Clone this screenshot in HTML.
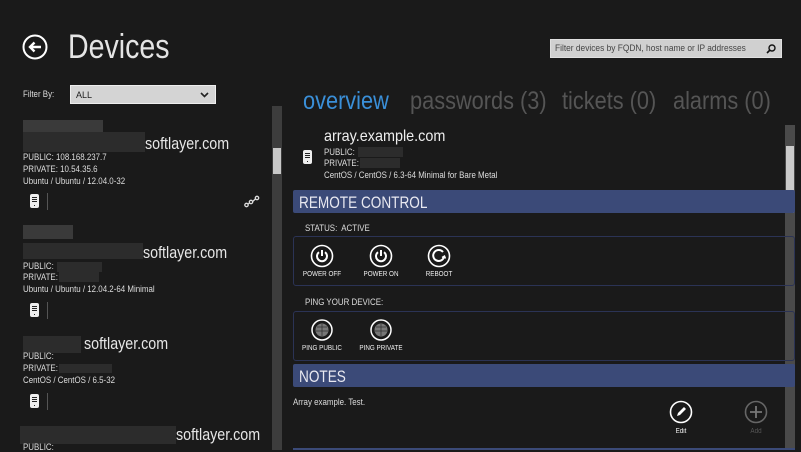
<!DOCTYPE html>
<html><head><meta charset="utf-8"><style>
*{margin:0;padding:0;box-sizing:border-box}
body{width:801px;height:450px;overflow:hidden;background:#1a1a1a;color:#e6e6e6;font-family:"Liberation Sans",sans-serif;position:relative}
.a{position:absolute;white-space:nowrap;transform-origin:left top}
.s{font-size:9px;color:#ddd;transform:scaleX(.88)}
.sl{font-size:17px;transform:scaleX(.84)}
.blur{position:absolute;background:#3a3a3a}
.b2{position:absolute;background:#2c2c2c}
.srv{position:absolute;width:9px;height:14px;background:#eee;border-radius:2px}
.srv i{position:absolute;left:2px;width:5px;height:1px;background:#222}
.srv b{position:absolute;left:4px;top:11px;width:1px;height:1px;background:#222}
.sep{position:absolute;width:1px;height:17px;background:#555}
.bar{position:absolute;left:293px;width:502px;height:23px;background:#3b4a78;border-radius:2px;color:#e8e8f0}
.bar span{position:absolute;left:6px;top:3px;font-size:17px;transform:scaleX(.8);transform-origin:left top}
.box{position:absolute;left:293px;width:502px;border:1px solid #2b3355;border-radius:3px}
.lbl{font-size:7px;color:#eee;text-align:center;width:60px;transform:scaleX(.9);transform-origin:center top}
.tab{font-size:25px;transform:scaleX(.87)}
</style></head><body>
<svg class="a" style="left:22px;top:34px" width="26" height="26" viewBox="0 0 26 26"><circle cx="13" cy="13" r="11.5" fill="none" stroke="#fff" stroke-width="2"/><path d="M19 13H8M12.5 8.5L8 13l4.5 4.5" fill="none" stroke="#fff" stroke-width="2.4"/></svg>
<div class="a" style="left:68px;top:28px;font-size:34px;color:#e4e4e4;transform:scaleX(.84)">Devices</div>
<div class="a" style="left:550px;top:39px;width:232px;height:19px;background:#d0d0d0;border:1px solid #e0e0e0;transform:none"><span class="a" style="left:4px;top:3px;font-size:9.5px;color:#444;transform:scaleX(.88)">Filter devices by FQDN, host name or IP addresses</span>
<svg class="a" style="right:5px;top:4px" width="10" height="10" viewBox="0 0 10 10"><circle cx="6" cy="4" r="3" fill="none" stroke="#111" stroke-width="1.4"/><path d="M4 6L1 9" stroke="#111" stroke-width="1.6"/></svg></div>
<div class="a s" style="left:23px;top:89px">Filter By:</div>
<div class="a" style="left:70px;top:85px;width:146px;height:19px;background:#d4d4d4;border:1px solid #eee"><span class="a" style="left:5px;top:4px;font-size:9px;color:#222">ALL</span><svg class="a" style="right:6px;top:6px" width="9" height="6"><path d="M1 1l3.5 3.5L8 1" fill="none" stroke="#222" stroke-width="1.6"/></svg></div>
<div class="a tab" style="left:303px;top:87px;color:#3a8fd8">overview</div>
<div class="a tab" style="left:410px;top:87px;color:#555">passwords (3)</div>
<div class="a tab" style="left:562px;top:87px;color:#555">tickets (0)</div>
<div class="a tab" style="left:673px;top:87px;color:#555">alarms (0)</div>
<div class="a" style="left:272px;top:106px;width:10px;height:344px;background:#3d3d3d"></div>
<div class="a" style="left:273px;top:148px;width:8px;height:26px;background:#c8c8c8"></div>
<!-- item1 -->
<div class="blur" style="left:23px;top:120px;width:80px;height:12px"></div>
<div class="b2" style="left:23px;top:132px;width:122px;height:20px"></div>
<div class="a sl" style="left:145px;top:134px">softlayer.com</div>
<div class="a s" style="left:23px;top:152px">PUBLIC: 108.168.237.7</div>
<div class="a s" style="left:23px;top:164px">PRIVATE: 10.54.35.6</div>
<div class="a s" style="left:23px;top:176px">Ubuntu / Ubuntu / 12.04.0-32</div>
<div class="srv" style="left:30px;top:194px"><i style="top:3px"></i><i style="top:5px"></i><i style="top:7px"></i><b></b></div>
<div class="sep" style="left:47px;top:193px"></div>
<svg class="a" style="left:244px;top:195px" width="16" height="13" viewBox="0 0 16 13"><g fill="none" stroke="#ddd" stroke-width="1.3"><circle cx="2.5" cy="10" r="1.7"/><circle cx="7" cy="7" r="1.7"/><circle cx="13" cy="3" r="1.7"/><path d="M4 9l1.6-1M8.6 6.5l2.8-2.5"/></g></svg>
<!-- item2 -->
<div class="blur" style="left:23px;top:225px;width:50px;height:14px"></div>
<div class="b2" style="left:23px;top:243px;width:120px;height:16px"></div>
<div class="a sl" style="left:143px;top:243px">softlayer.com</div>
<div class="a s" style="left:23px;top:261px">PUBLIC:</div><div class="b2" style="left:57px;top:262px;width:45px;height:10px"></div>
<div class="a s" style="left:23px;top:272px">PRIVATE:</div><div class="b2" style="left:59px;top:271px;width:40px;height:11px"></div>
<div class="a s" style="left:23px;top:284px">Ubuntu / Ubuntu / 12.04.2-64 Minimal</div>
<div class="srv" style="left:30px;top:303px"><i style="top:3px"></i><i style="top:5px"></i><i style="top:7px"></i><b></b></div>
<div class="sep" style="left:47px;top:302px"></div>
<!-- item3 -->
<div class="b2" style="left:23px;top:336px;width:58px;height:17px"></div>
<div class="a sl" style="left:84px;top:334px">softlayer.com</div>
<div class="a s" style="left:23px;top:351px">PUBLIC:</div>
<div class="a s" style="left:23px;top:363px">PRIVATE:</div><div class="b2" style="left:59px;top:364px;width:53px;height:9px"></div>
<div class="a s" style="left:23px;top:375px">CentOS / CentOS / 6.5-32</div>
<div class="srv" style="left:30px;top:394px"><i style="top:3px"></i><i style="top:5px"></i><i style="top:7px"></i><b></b></div>
<div class="sep" style="left:47px;top:393px"></div>
<!-- item4 -->
<div class="b2" style="left:20px;top:426px;width:156px;height:18px"></div>
<div class="a sl" style="left:176px;top:425px">softlayer.com</div>
<div class="a s" style="left:23px;top:442px">PUBLIC:</div>
<!-- right scrollbar -->
<div class="a" style="left:785px;top:125px;width:10px;height:325px;background:#4a4a4a"></div>
<div class="a" style="left:786px;top:146px;width:8px;height:67px;background:#cacaca"></div>
<!-- detail -->
<div class="srv" style="left:303px;top:150px"><i style="top:3px"></i><i style="top:5px"></i><i style="top:7px"></i><b></b></div>
<div class="a" style="left:324px;top:128px;font-size:16px;color:#eee;transform:scaleX(.9)">array.example.com</div>
<div class="a s" style="left:324px;top:147px">PUBLIC:</div><div class="b2" style="left:358px;top:147px;width:45px;height:10px"></div>
<div class="a s" style="left:324px;top:158px">PRIVATE:</div><div class="b2" style="left:360px;top:158px;width:40px;height:10px"></div>
<div class="a s" style="left:324px;top:170px">CentOS / CentOS / 6.3-64 Minimal for Bare Metal</div>
<div class="bar" style="top:190px"><span>REMOTE CONTROL</span></div>
<div class="a s" style="left:305px;top:223px">STATUS:&nbsp; ACTIVE</div>
<div class="box" style="top:236px;height:50px"></div>
<svg class="a" style="left:310px;top:244px" width="24" height="24" viewBox="0 0 24 24"><circle cx="12" cy="12" r="10.5" fill="none" stroke="#fff" stroke-width="1.6"/><path d="M9 8.2A5 5 0 1 0 15 8.2" fill="none" stroke="#fff" stroke-width="2"/><path d="M12 6v6" stroke="#fff" stroke-width="2"/></svg>
<svg class="a" style="left:369px;top:244px" width="24" height="24" viewBox="0 0 24 24"><circle cx="12" cy="12" r="10.5" fill="none" stroke="#fff" stroke-width="1.6"/><path d="M9 8.2A5 5 0 1 0 15 8.2" fill="none" stroke="#fff" stroke-width="2"/><path d="M12 6v6" stroke="#fff" stroke-width="2"/></svg>
<svg class="a" style="left:427px;top:244px" width="24" height="24" viewBox="0 0 24 24"><circle cx="12" cy="12" r="10.5" fill="none" stroke="#fff" stroke-width="1.6"/><path d="M16 8A5.5 5.5 0 1 0 17 13" fill="none" stroke="#fff" stroke-width="2"/><path d="M15 13.5l2.5-1.5 1 2.5" fill="none" stroke="#fff" stroke-width="1.4"/></svg>
<div class="a lbl" style="left:292px;top:271px">POWER OFF</div>
<div class="a lbl" style="left:351px;top:271px">POWER ON</div>
<div class="a lbl" style="left:409px;top:271px">REBOOT</div>
<div class="a s" style="left:305px;top:297px">PING YOUR DEVICE:</div>
<div class="box" style="top:311px;height:50px"></div>
<svg class="a" style="left:311px;top:319px" width="22" height="22" viewBox="0 0 22 22"><circle cx="11" cy="11" r="10" fill="none" stroke="#fff" stroke-width="1.5"/><circle cx="11" cy="11" r="6.5" fill="#777"/><path d="M6 8h10M5 12h12M11 5v12" stroke="#333" stroke-width="0.8"/></svg>
<svg class="a" style="left:370px;top:319px" width="22" height="22" viewBox="0 0 22 22"><circle cx="11" cy="11" r="10" fill="none" stroke="#fff" stroke-width="1.5"/><circle cx="11" cy="11" r="6.5" fill="#777"/><path d="M6 8h10M5 12h12M11 5v12" stroke="#333" stroke-width="0.8"/></svg>
<div class="a lbl" style="left:292px;top:345px">PING PUBLIC</div>
<div class="a lbl" style="left:351px;top:345px">PING PRIVATE</div>
<div class="bar" style="top:364px"><span>NOTES</span></div>
<div class="a s" style="left:293px;top:397px">Array example. Test.</div>
<svg class="a" style="left:669px;top:400px" width="24" height="24" viewBox="0 0 24 24"><circle cx="12" cy="12" r="10.5" fill="none" stroke="#fff" stroke-width="1.6"/><path d="M8 16l1-3 6-6 2 2-6 6z" fill="#fff"/></svg>
<div class="a lbl" style="left:651px;top:428px">Edit</div>
<svg class="a" style="left:744px;top:400px" width="24" height="24" viewBox="0 0 24 24"><circle cx="12" cy="12" r="10.5" fill="none" stroke="#666" stroke-width="1.6"/><path d="M12 6v12M6 12h12" stroke="#777" stroke-width="1.8"/></svg>
<div class="a lbl" style="left:726px;top:428px;color:#555">Add</div>
<div class="a" style="left:293px;top:448px;width:502px;height:2px;background:#3b4a78"></div>
</body></html>
